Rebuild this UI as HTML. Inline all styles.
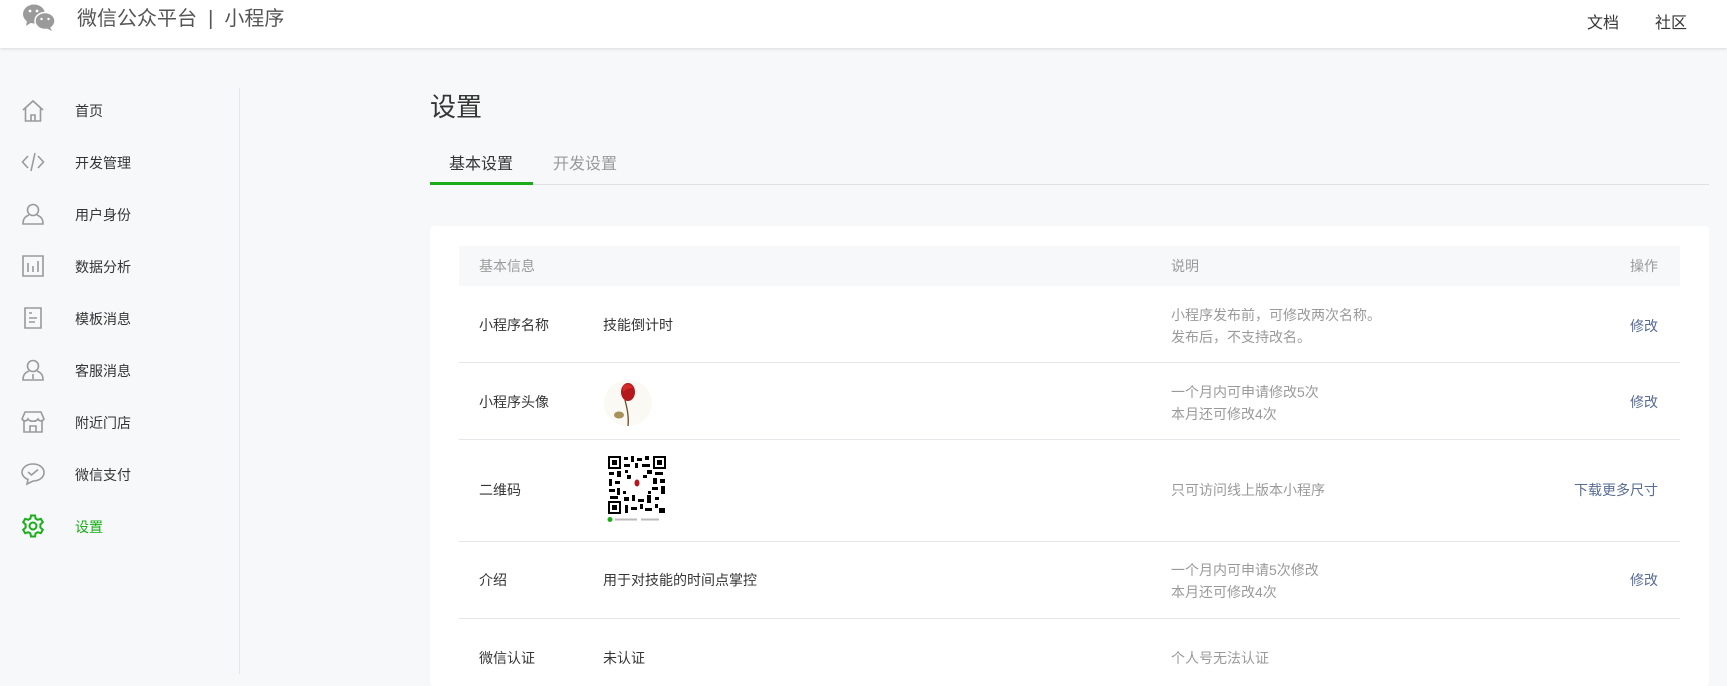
<!DOCTYPE html>
<html><head><meta charset="utf-8"><style>
*{margin:0;padding:0;box-sizing:border-box}
body{width:1727px;height:674px;overflow:hidden;background:#f6f8f9;font-family:"Liberation Sans","Noto Sans CJK SC",sans-serif;color:#353535;position:relative}
.a{position:absolute;white-space:nowrap}
.hd{position:absolute;left:0;top:0;width:1727px;height:48px;background:#fff;box-shadow:0 1px 3px rgba(0,0,0,.12)}
.nav{font-size:14px;line-height:20px}
.ic{position:absolute;left:21px;width:24px;height:24px}
.g{color:#9a9a9a}
.l{color:#576b95}
.row{position:absolute;left:459px;width:1221px;border-top:1px solid #e7e7eb}
.t{font-size:14px;line-height:22px}
</style></head><body>
<div class="hd"></div>
<svg class="a" style="left:22px;top:3px" width="34" height="29" viewBox="0 0 34 29">
<ellipse cx="12" cy="11" rx="11" ry="9.5" fill="#9a9a9a"/><path d="M5 18 L4 23 L10 19Z" fill="#9a9a9a"/>
<ellipse cx="23" cy="18" rx="10" ry="8.5" fill="#9a9a9a" stroke="#fff" stroke-width="1.5"/><path d="M28 24 L30 28 L24 25Z" fill="#9a9a9a"/>
<circle cx="8" cy="8" r="1.4" fill="#fff"/><circle cx="15" cy="8" r="1.4" fill="#fff"/><circle cx="19.5" cy="16" r="1.2" fill="#fff"/><circle cx="26.5" cy="16" r="1.2" fill="#fff"/></svg>
<div class="a" style="left:77px;top:6px;font-size:20px;line-height:26px;color:#555">微信公众平台 &nbsp;|&nbsp; 小程序</div>
<div class="a" style="left:1587px;top:9px;font-size:16px;color:#353535">文档</div>
<div class="a" style="left:1655px;top:9px;font-size:16px;color:#353535">社区</div>

<div class="a" style="left:239px;top:88px;width:1px;height:586px;background:#e7e7eb"></div>
<!-- sidebar -->
<svg class="ic" style="top:99px" viewBox="0 0 24 24" fill="none" stroke="#9a9a9a" stroke-width="1.6"><path d="M2 11 L12 2 L22 11 M4.5 9 V22 H19.5 V9 M10 22 V16 H14 V22"/></svg>
<div class="a nav" style="left:75px;top:101px">首页</div>
<svg class="ic" style="top:150px" viewBox="0 0 24 24" fill="none" stroke="#9a9a9a" stroke-width="1.6"><path d="M7 6 L1.5 12 L7 18 M17 6 L22.5 12 L17 18 M14 3 L10 21"/></svg>
<div class="a nav" style="left:75px;top:153px">开发管理</div>
<svg class="ic" style="top:202px" viewBox="0 0 24 24" fill="none" stroke="#9a9a9a" stroke-width="1.6"><circle cx="12" cy="8" r="5.5"/><path d="M8 13 C3 15 2 18 2 22 H22 C22 18 21 15 16 13"/></svg>
<div class="a nav" style="left:75px;top:205px">用户身份</div>
<svg class="ic" style="top:254px" viewBox="0 0 24 24" fill="none" stroke="#9a9a9a" stroke-width="1.6"><path d="M2 2 H22 V22 H2Z M7 9 V18 M12 12 V18 M17 7 V18"/></svg>
<div class="a nav" style="left:75px;top:257px">数据分析</div>
<svg class="ic" style="top:306px" viewBox="0 0 24 24" fill="none" stroke="#9a9a9a" stroke-width="1.6"><path d="M4 2 H20 V22 H4Z M8 7 H11 M8 12 H16 M8 16 H14"/></svg>
<div class="a nav" style="left:75px;top:309px">模板消息</div>
<svg class="ic" style="top:358px" viewBox="0 0 24 24" fill="none" stroke="#9a9a9a" stroke-width="1.6"><circle cx="12" cy="8" r="5.5"/><path d="M8 13 C3 15 2 18 2 22 H22 C22 18 21 15 16 13 M12 16 V21"/></svg>
<div class="a nav" style="left:75px;top:361px">客服消息</div>
<svg class="ic" style="top:410px" viewBox="0 0 24 24" fill="none" stroke="#9a9a9a" stroke-width="1.6"><path d="M4 2 H20 L23 9 C21 12 18 11 17 9 C15 12 9 12 7 9 C6 11 3 12 1 9Z M3 11 V22 H21 V11 M9 22 V16 H15 V22"/></svg>
<div class="a nav" style="left:75px;top:413px">附近门店</div>
<svg class="ic" style="top:462px" viewBox="0 0 24 24" fill="none" stroke="#9a9a9a" stroke-width="1.6"><path d="M12 2 C18 2 23 5.5 23 10.5 C23 15.5 18 19 12 19 L6 22 L7 17.5 C3 16 1 13 1 10.5 C1 5.5 6 2 12 2Z M7 10 L10.5 13 L17 7.5"/></svg>
<div class="a nav" style="left:75px;top:465px">微信支付</div>
<svg class="ic" style="top:514px" viewBox="0 0 24 24" fill="none" stroke="#1aad19" stroke-width="2"><path d="M10 1.5 H14 L14.6 4.6 L16.8 5.8 L19.8 4.8 L21.8 8.2 L19.4 10.4 V13.6 L21.8 15.8 L19.8 19.2 L16.8 18.2 L14.6 19.4 L14 22.5 H10 L9.4 19.4 L7.2 18.2 L4.2 19.2 L2.2 15.8 L4.6 13.6 V10.4 L2.2 8.2 L4.2 4.8 L7.2 5.8 L9.4 4.6Z"/><circle cx="12" cy="12" r="3.5"/></svg>
<div class="a nav" style="left:75px;top:517px;color:#1aad19">设置</div>

<!-- main -->
<div class="a" style="left:430px;top:92px;font-size:26px;line-height:30px;color:#353535">设置</div>
<div class="a" style="left:430px;top:184px;width:1279px;height:1px;background:#e0e0e0"></div>
<div class="a" style="left:430px;top:182px;width:103px;height:3px;background:#1aad19"></div>
<div class="a" style="left:449px;top:155px;font-size:16px;line-height:20px">基本设置</div>
<div class="a" style="left:553px;top:155px;font-size:16px;line-height:20px;color:#9a9a9a">开发设置</div>

<div class="a" style="left:430px;top:226px;width:1279px;height:460px;background:#fff;border-radius:4px"></div>
<div class="a" style="left:459px;top:246px;width:1221px;height:40px;background:#f6f8f9"></div>
<div class="a t g" style="left:479px;top:255px">基本信息</div>
<div class="a t g" style="left:1171px;top:255px">说明</div>
<div class="a t g" style="left:1630px;top:255px">操作</div>

<div class="row" style="top:362px"></div>
<div class="row" style="top:439px"></div>
<div class="row" style="top:541px"></div>
<div class="row" style="top:618px"></div>

<div class="a t" style="left:479px;top:314px">小程序名称</div>
<div class="a t" style="left:603px;top:314px">技能倒计时</div>
<div class="a t g" style="left:1171px;top:304px">小程序发布前，可修改两次名称。<br>发布后，不支持改名。</div>
<div class="a t l" style="left:1630px;top:315px">修改</div>

<div class="a t" style="left:479px;top:391px">小程序头像</div>
<svg class="a" style="left:603px;top:380px" width="50" height="46" viewBox="0 0 50 46"><ellipse cx="25" cy="23" rx="24" ry="23" fill="#fbf9f4"/><path d="M22 20 C24 28 26 36 25 46" stroke="#6b4a2a" stroke-width="1.3" fill="none"/><ellipse cx="25" cy="12" rx="7" ry="9" fill="#b3191c"/><path d="M20 6 C24 3 28 4 30 8 C26 8 23 9 20 12Z" fill="#d42a25"/><ellipse cx="16" cy="35" rx="5" ry="3.5" fill="#a89058"/></svg>
<div class="a t g" style="left:1171px;top:381px">一个月内可申请修改5次<br>本月还可修改4次</div>
<div class="a t l" style="left:1630px;top:391px">修改</div>

<div class="a t" style="left:479px;top:479px">二维码</div>
<svg class="a" style="left:607px;top:455px" width="60" height="68" viewBox="0 0 60 68">
<rect x="0" y="0" width="60" height="60" fill="#fff"/>
<g fill="#000"><rect x="1" y="1" width="13" height="13"/><rect x="46" y="1" width="13" height="13"/><rect x="1" y="46" width="13" height="13"/></g>
<g fill="#fff"><rect x="3" y="3" width="9" height="9"/><rect x="48" y="3" width="9" height="9"/><rect x="3" y="48" width="9" height="9"/></g>
<g fill="#000"><rect x="5" y="5" width="5" height="5"/><rect x="50" y="5" width="5" height="5"/><rect x="5" y="50" width="5" height="5"/>
<path d="M17 2h4v3h-4zM24 1h3v6h-3zM30 3h5v3h-5zM38 1h4v4h-4zM17 9h6v3h-6zM28 8h3v5h-3zM35 9h8v3h-8zM2 17h5v3H2zM10 16h4v6h-4zM18 15h3v3h-3zM40 15h5v4h-5zM48 17h8v3h-8zM2 24h3v7H2zM8 26h5v3H8zM46 23h4v6h-4zM53 24h5v4h-5zM2 34h6v3H2zM10 33h3v7h-3zM45 32h6v3h-6zM54 31h4v8h-4zM3 41h8v3H3zM17 42h5v4h-5zM25 40h3v6h-3zM31 44h6v3h-6zM40 40h4v8h-4zM48 42h4v3h-4zM18 50h3v8h-3zM24 52h6v3h-6zM33 49h3v5h-3zM38 53h7v3h-7zM48 49h3v4h-3zM52 53h6v5h-6zM20 20h4v4h-4zM36 20h4v3h-4zM16 36h3v3h-3zM41 36h3v3h-3z"/></g>
<circle cx="30" cy="30" r="9" fill="#fff"/><ellipse cx="30" cy="28" rx="2.5" ry="3.5" fill="#b3191c"/>
<circle cx="3" cy="64.5" r="2.5" fill="#1aad19"/><rect x="8" y="63.5" width="22" height="2" fill="#bbb"/><rect x="34" y="63.5" width="18" height="2" fill="#bbb"/></svg>
<div class="a t g" style="left:1171px;top:479px">只可访问线上版本小程序</div>
<div class="a t l" style="left:1574px;top:479px">下载更多尺寸</div>

<div class="a t" style="left:479px;top:569px">介绍</div>
<div class="a t" style="left:603px;top:569px">用于对技能的时间点掌控</div>
<div class="a t g" style="left:1171px;top:559px">一个月内可申请5次修改<br>本月还可修改4次</div>
<div class="a t l" style="left:1630px;top:569px">修改</div>

<div class="a t" style="left:479px;top:647px">微信认证</div>
<div class="a t" style="left:603px;top:647px">未认证</div>
<div class="a t g" style="left:1171px;top:647px">个人号无法认证</div>
</body></html>
